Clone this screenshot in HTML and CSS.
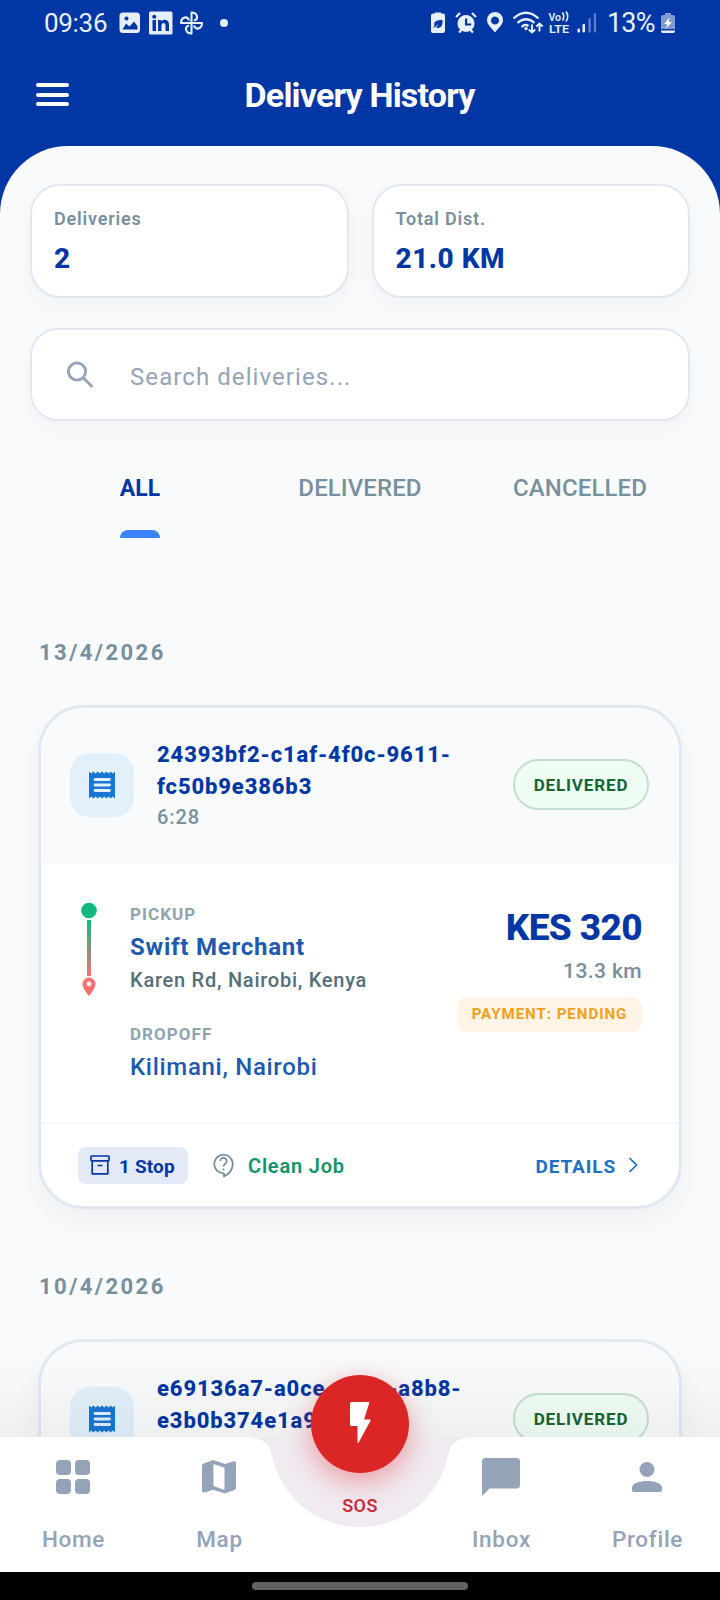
FILE: index.html
```html
<!DOCTYPE html>
<html lang="en">
<head>
<meta charset="utf-8">
<title>Delivery History</title>
<link rel="stylesheet" href="styles.css">
</head>
<body>
<div class="screen">
  <div class="status">
    <span class="clock">09:36</span>
    <svg class="status-left" width="112" height="26" viewBox="0 0 112 26" fill="#e8effc">
      <path fill-rule="evenodd" d="M4 2.500h13.500a3.500 3.500 0 0 1 3.500 3.500v13.500a3.500 3.500 0 0 1-3.500 3.500H4A3.500 3.500 0 0 1 .5 19.500V6A3.500 3.500 0 0 1 4 2.500zM3.500 19.500h15v-3.200L15 11.500l-4.500 5L7 13.500zM7.500 6.500a2 2 0 1 0 .01 0z"/>
      <path fill-rule="evenodd" d="M31.500 1.500h20.500a1.500 1.500 0 0 1 1.500 1.500v20a1.500 1.500 0 0 1-1.500 1.500H31.500A1.500 1.500 0 0 1 30 23V3a1.500 1.500 0 0 1 1.500-1.500zM33.500 10v11H37V10zM35.250 4.800a2 2 0 1 0 .01 0zM39 10v11h3.500v-5.500c0-3.200 4-3.400 4 0V21H50v-6.500c0-5.400-5.500-6-7.500-3V10z"/>
      <g fill="none" stroke="#e8effc" stroke-width="2.100" stroke-linejoin="round">
        <path d="M72.500 13V2.500c6 0 7.500 6.500 2.500 8"/>
        <path d="M72.500 13V2.500c6 0 7.500 6.500 2.500 8" transform="rotate(90 72.500 13)"/>
        <path d="M72.500 13V2.500c6 0 7.500 6.500 2.500 8" transform="rotate(180 72.500 13)"/>
        <path d="M72.500 13V2.500c6 0 7.500 6.500 2.500 8" transform="rotate(270 72.500 13)"/>
      </g>
      <circle cx="105" cy="13" r="4"/>
    </svg>
    <svg class="status-right" width="168" height="26" viewBox="0 0 168 26" fill="#e8effc">
      <path fill-rule="evenodd" d="M5 3.500V2.500h6v1h2a2 2 0 0 1 2 2V21a2 2 0 0 1-2 2H3a2 2 0 0 1-2-2V5.500a2 2 0 0 1 2-2zM3 17.500l1.500-1.500c-1.500-5 3-6 8-6 .5 6-2 9-6.500 7.500l3-4-4.500 4z"/>
      <g><path fill-rule="evenodd" d="M36 5a8.500 8.500 0 1 0 .01 0zM35 8.500h2.200v5h4v2H35z"/><path d="M26 7l4-4M42 3l4 4M29 22.500l3-3M43 22.500l-3-3" stroke="#e8effc" stroke-width="2.200"/></g>
      <path fill-rule="evenodd" d="M65 2a8 8 0 0 1 8 8c0 4.500-4 7.500-8 12.500-4-5-8-8-8-12.500a8 8 0 0 1 8-8zM65 6.500a4 4 0 1 0 .01 0z"/>
      <g fill="none" stroke="#e8effc" stroke-width="2.200"><path d="M83.500 8.500q12.500-11.500 25 0M87.500 13q8.500-7.500 17 0M91.500 17q3.500-3.500 7-1"/><path d="M102 14.500v8M98.800 19.500l3.200 3 3.200-3M109.500 21.500v-8M106.300 16.500l3.200-3 3.200 3" stroke-width="1.900"/></g>
      <circle cx="96" cy="18.500" r="1.700"/>
      <text class="volte" x="118.500" y="11" textLength="12.500" lengthAdjust="spacingAndGlyphs">Vo</text>
      <path d="M132.500 2.500q2.500 4 0 8M136 1.500q3.500 5 0 10" fill="none" stroke="#e8effc" stroke-width="1.600"/>
      <text class="volte" x="119" y="22.500" textLength="20" lengthAdjust="spacingAndGlyphs">LTE</text>
      <rect x="147.500" y="18.500" width="2.500" height="4" rx="1"/><rect x="152.500" y="14" width="2.500" height="8.500" rx="1"/>
      <rect x="158.500" y="8" width="2.300" height="14.500" rx="1" opacity=".4"/><rect x="163.800" y="3" width="2.300" height="19.500" rx="1" opacity=".4"/>
    </svg>
    <span class="percent">13%</span>
    <svg width="14" height="20" viewBox="0 0 14 20"><path d="M4 2V0h6v2h2a2 2 0 0 1 2 2v12H0V4a2 2 0 0 1 2-2z" fill="#7f9bd2"/><path d="M0 17.500h14a2 2 0 0 1-2 2.500H2a2 2 0 0 1-2-2.500z" fill="#e8effc"/><path d="M8.500 4.500L3 11h3.300L5 15.500 11 9H7.800z" fill="#fff"/></svg>
  </div>
  <header class="topbar">
    <div class="burger"><i></i><i></i><i></i></div>
    <h1 class="title">Delivery History</h1>
  </header>
  <main class="panel">
    <section class="stats">
      <div class="stat"><div class="stat-label">Deliveries</div><div class="stat-value">2</div></div>
      <div class="stat"><div class="stat-label">Total Dist.</div><div class="stat-value">21.0 KM</div></div>
    </section>
    <div class="search">
      <svg width="27" height="28" viewBox="0 0 27 28" fill="none" stroke="#94a3b8" stroke-width="2.900"><circle cx="10" cy="10.500" r="8.600"/><path d="M16.500 17l9 9"/></svg>
      <span class="placeholder">Search deliveries...</span>
    </div>
    <nav class="tabs">
      <div class="tab active"><span>ALL</span></div>
      <div class="tab"><span>DELIVERED</span></div>
      <div class="tab"><span>CANCELLED</span></div>
    </nav>
    <h2 class="date">13/4/2026</h2>
    <article class="card">
      <div class="card-head">
        <div class="tile"><svg width="26" height="28" viewBox="0 0 26 28"><path d="M0 .5l2.170 2L4.330.5l2.170 2L8.670.5l2.170 2L13 .5l2.170 2L17.330.5l2.170 2L21.670.5l2.170 2L26 .5v27l-2.170-2-2.160 2-2.170-2-2.170 2-2.160-2-2.170 2-2.170-2-2.160 2-2.170-2-2.170 2-2.160-2L0 27.500z" fill="#1976d2"/><path d="M6 8.500h14.500M6 14h14.500M6 19.500h14.500" stroke="#e1f0fb" stroke-width="2.800" stroke-linecap="round"/></svg></div>
        <div class="ident"><div class="id">24393bf2-c1af-4f0c-9611-<br>fc50b9e386b3</div><div class="time">6:28</div></div>
        <span class="badge">DELIVERED</span>
      </div>
      <div class="card-body">
        <svg class="rail" width="18" height="96" viewBox="0 0 18 96">
          <defs><linearGradient id="route" x1="0" y1="0" x2="0" y2="1"><stop offset="0" stop-color="#10b981"/><stop offset="1" stop-color="#f87171"/></linearGradient></defs>
          <circle cx="9" cy="8.500" r="7.800" fill="#10b981"/><rect x="7" y="18" width="4" height="56" fill="url(#route)"/>
          <path fill-rule="evenodd" d="M9 75.500a6.500 6.500 0 0 1 6.500 6.500c0 4.500-6.500 12-6.500 12s-6.500-7.500-6.500-12A6.500 6.500 0 0 1 9 75.500zM9 79.500a2.400 2.400 0 1 0 .01 0z" fill="#f87171"/>
        </svg>
        <div class="stops">
          <div class="kind">PICKUP</div>
          <div class="place bold">Swift Merchant</div>
          <div class="address">Karen Rd, Nairobi, Kenya</div>
          <div class="kind drop">DROPOFF</div>
          <div class="place">Kilimani, Nairobi</div>
        </div>
        <div class="fare">
          <div class="price">KES 320</div>
          <div class="distance">13.3 km</div>
          <div class="payment">PAYMENT: PENDING</div>
        </div>
      </div>
      <div class="card-foot">
        <span class="chip"><svg width="20" height="20" viewBox="0 0 20 20" fill="none" stroke="#0037a4" stroke-width="1.700" stroke-linejoin="round"><rect x="1" y="1" width="18" height="4.800" rx=".8"/><path d="M2.200 6v12.800h15.600V6M7.500 10.500h5"/></svg><span>1 Stop</span></span>
        <svg class="help" width="21" height="25" viewBox="0 0 21 25" fill="none" stroke="#78909c" stroke-width="1.800"><path d="M11 20.500v3c5-2.500 8.800-7.500 8.800-13a9.300 9.300 0 1 0-9.300 9.800z" stroke-linejoin="round"/><path d="M7.300 8a3.200 3.200 0 1 1 5.300 2.400c-1.300 1-2.100 1.400-2.100 3.200M10.500 15.500v2"/></svg>
        <span class="clean">Clean Job</span>
        <span class="details">DETAILS</span>
        <svg class="chev" width="10" height="16" viewBox="0 0 10 16" fill="none" stroke="#1e70c4" stroke-width="1.700"><path d="M1.500 1l7 7-7 7"/></svg>
      </div>
    </article>
    <h2 class="date later">10/4/2026</h2>
    <article class="card">
      <div class="card-head">
        <div class="tile"><svg width="26" height="28" viewBox="0 0 26 28"><path d="M0 .5l2.170 2L4.330.5l2.170 2L8.670.5l2.170 2L13 .5l2.170 2L17.330.5l2.170 2L21.670.5l2.170 2L26 .5v27l-2.170-2-2.160 2-2.170-2-2.170 2-2.160-2-2.170 2-2.170-2-2.160 2-2.170-2-2.170 2-2.160-2L0 27.500z" fill="#1976d2"/><path d="M6 8.500h14.500M6 14h14.500M6 19.500h14.500" stroke="#e1f0fb" stroke-width="2.800" stroke-linecap="round"/></svg></div>
        <div class="ident"><div class="id">e69136a7-a0ce-4b1c-a8b8-<br>e3b0b374e1a9</div><div class="time">&nbsp;</div></div>
        <span class="badge">DELIVERED</span>
      </div>
    </article>
  </main>

  <div class="dock">
    <div class="shade"></div>
    <svg class="dock-shape" width="720" height="135" viewBox="0 0 720 135">
      <defs><linearGradient id="well" x1="0" y1="0" x2="0" y2="1"><stop offset="0" stop-color="#efecf1"/><stop offset="1" stop-color="#f2eaf3"/></linearGradient></defs>
      <rect x="250" width="220" height="100" fill="url(#well)"/>
      <path d="M0 0H243C256 0 269 3 271.400 16A90 90 0 0 0 448.600 16C451 3 464 0 477 0H720V135H0z" fill="#fff"/>
    </svg>
    <div class="nav-items">
      <div class="nav-item home"><svg width="34" height="34" viewBox="0 0 34 34" fill="#94a3b8"><rect width="15" height="15" rx="4"/><rect x="19" width="15" height="15" rx="4"/><rect y="19" width="15" height="15" rx="4"/><rect x="19" y="19" width="15" height="15" rx="4"/></svg><span>Home</span></div>
      <div class="nav-item map"><svg width="34" height="34" viewBox="0 0 34 34" fill="#94a3b8"><path fill-rule="evenodd" d="M2 3.200L11 .2Q11.500 0 12 .2L23 4l8-2.600q3-.9 3 2v24.200q0 2-2 2.700l-9 3q-.5.2-1 0L11 29.700l-8 2.700q-3 .8-3-2V6q0-2 2-2.800zM11.500 4v22l11 4V7.800z"/></svg><span>Map</span></div>
      <div class="nav-item inbox"><svg width="38" height="38" viewBox="0 0 38 38" fill="#94a3b8"><path d="M3.500 0h31A3.500 3.500 0 0 1 38 3.500V27a3.500 3.500 0 0 1-3.500 3.500H7.500L0 38V3.500A3.500 3.500 0 0 1 3.500 0z"/></svg><span>Inbox</span></div>
      <div class="nav-item profile"><svg width="30" height="30" viewBox="0 0 30 30" fill="#94a3b8"><circle cx="15" cy="7.500" r="7.500"/><path d="M0 25.500C0 21.500 7 19 15 19s15 2.500 15 6.500V28a2 2 0 0 1-2 2H2a2 2 0 0 1-2-2z"/></svg><span>Profile</span></div>
    </div>
    <div class="fab"><svg width="21" height="41" viewBox="0 0 21 41" fill="#fff"><path d="M1.500 0h17q1 0 .7 1L14 17.500h5.800q1.400 0 .7 1.300L8.800 40.300Q7.500 42 7.500 40V24H1.500Q0 24 0 22.500v-21Q0 0 1.500 0z"/></svg></div>
    <span class="sos">SOS</span>
    <div class="gesture"><i></i></div>
  </div>
</div>
</body>
</html>
```
FILE: styles.css
```css
* { box-sizing: border-box; }
body { margin: 0; font-family: Roboto, "Liberation Sans", sans-serif; background: #0037a4; }
.screen { position: relative; width: 720px; height: 1600px; overflow: hidden; display: flex; flex-direction: column; }
svg { display: block; flex: none; }

.status { height: 46px; flex: none; display: flex; align-items: center; color: #e8effc; padding: 0 44px; }
.clock, .percent { font-size: 26px; line-height: 30px; letter-spacing: -0.3px; font-weight: 400; }
.clock { width: 75px; }
.status-right { margin-left: 199px; }
.volte { font-size: 11px; font-weight: 600; }
.percent { margin-left: 9px; width: 54px; letter-spacing: -0.8px; font-size: 27px; }

.topbar { height: 100px; flex: none; display: flex; align-items: center; padding: 0 36px 3px; }
.burger { display: flex; flex-direction: column; gap: 5.500px; width: 33px; }
.burger i { height: 4px; border-radius: 2px; background: #fff; }
.title { flex: 1; margin: 1px 34px 0 0; text-align: center; color: #fff; font-size: 34px; line-height: 40px; font-weight: 700; letter-spacing: -0.8px; }

.panel { flex: 1; min-height: 0; background: #f8fafc; border-radius: 68px 68px 0 0; padding: 38px 30px 0; }
.stats { display: flex; gap: 23px; }
.stat { flex: 1; height: 114px; padding: 21px 22px; background: #fff; border: 2px solid #e2e8f0; border-radius: 30px; box-shadow: 0 8px 22px rgba(0,0,0,.035); }
.stat-label { font-size: 18px; line-height: 24px; font-weight: 600; letter-spacing: .8px; color: #78909c; }
.stat-value { margin-top: 11px; font-size: 28px; line-height: 34px; font-weight: 800; color: #0037a4; letter-spacing: .5px; }
.search { margin-top: 30px; height: 93px; display: flex; align-items: center; padding: 0 35px; background: #fff; border: 2px solid #e2e8f0; border-radius: 28px; box-shadow: 0 8px 22px rgba(0,0,0,.035); }
.placeholder { margin: 5px 0 0 36px; font-size: 24px; line-height: 30px; letter-spacing: 1.08px; color: #94a3b8; }

.tabs { margin-top: 52px; display: grid; grid-template-columns: repeat(3, 1fr); height: 65px; }
.tab { display: flex; justify-content: center; font-size: 24px; line-height: 30px; font-weight: 500; letter-spacing: .1px; color: #78909c; }
.tab.active { color: #0037a4; font-weight: 700; font-size: 23px; letter-spacing: 0; line-height: 31px; }
.tab.active span { display: flex; flex-direction: column; justify-content: space-between; }
.tab.active span::after { content: ""; height: 8px; border-radius: 8px 8px 0 0; background: #3b82f6; }

.date { margin: 102px 0 39px 9px; font-size: 22px; line-height: 26px; font-weight: 700; letter-spacing: 2.450px; color: #78909c; }
.date.later { margin-top: 65px; }
.card { margin: 0 8px; border: 3px solid #e2e8f0; border-radius: 46px; background: #fff; overflow: hidden; box-shadow: 0 12px 30px rgba(0,0,0,.045); }
.card-head { height: 154px; display: flex; align-items: center; padding: 0 30px 0 29px; background: #f8fafc; }
.tile { flex: none; width: 64px; height: 64px; border-radius: 20px; background: #e1f0fb; display: grid; place-items: center; }
.ident { flex: 1; margin-left: 23px; white-space: nowrap; }
.id { padding-top: 1px; font-size: 22px; line-height: 32px; font-weight: 800; letter-spacing: .88px; color: #0037a4; }
.time { margin-top: -1px; font-size: 20px; line-height: 30px; font-weight: 500; letter-spacing: .9px; color: #78909c; }
.badge { flex: none; width: 136px; height: 51px; margin-bottom: 2px; border: 2px solid #c5dfcf; border-radius: 26px; background: #f0fdf4; color: #166534; display: grid; place-items: center; font-size: 17px; font-weight: 700; letter-spacing: .85px; padding-top: 1px; }

.card-body { height: 260px; border-top: 1px solid #f1f5f9; display: flex; align-items: flex-start; padding: 39px 37px 0 39px; }
.stops { flex: 1; margin: 2px 0 0 32px; }
.kind { font-size: 17px; line-height: 20px; font-weight: 700; letter-spacing: 1.050px; color: #90a4ae; }
.drop { margin-top: 30px; }
.place { margin-top: 7px; font-size: 24px; line-height: 32px; font-weight: 500; letter-spacing: .7px; color: #1e5ab0; }
.bold { font-weight: 700; letter-spacing: .75px; }
.address { margin-top: 3px; font-size: 20px; line-height: 28px; letter-spacing: .75px; font-weight: 500; color: #546e7a; }
.fare { display: flex; flex-direction: column; align-items: flex-end; margin-top: 4px; }
.price { font-size: 37px; line-height: 44px; font-weight: 800; letter-spacing: -0.6px; color: #0037a4; }
.distance { margin-top: 7px; font-size: 21px; line-height: 28px; font-weight: 500; letter-spacing: .4px; color: #78909c; }
.payment { margin-top: 12px; width: 185px; height: 35px; border-radius: 10px; background: #fff4e5; color: #f0a020; display: grid; place-items: center; font-size: 15px; font-weight: 700; letter-spacing: 1px; padding-bottom: 1px; }

.card-foot { height: 84px; border-top: 2px solid #f5f7fa; display: flex; align-items: center; padding: 0 41px 0 37px; }
.chip { width: 110px; height: 37px; border-radius: 8px; background: #e3e9f6; display: flex; align-items: center; padding: 0 12px; gap: 9px; color: #0037a4; font-size: 19px; font-weight: 700; letter-spacing: .15px; white-space: nowrap; }
.chip svg { margin-bottom: 1px; }
.chip span { margin-top: 3px; }
.help { margin-left: 25px; }
.clean { margin: 2px 0 0 14px; font-size: 20px; font-weight: 600; letter-spacing: .8px; color: #0f9468; }
.details { margin: 2px 0 0 auto; font-size: 19px; font-weight: 700; letter-spacing: .9px; color: #1e70c4; }
.chev { margin-left: 12px; }

/* Bottom navigation floats above the scrolling list */
.dock { position: absolute; left: 0; right: 0; bottom: 0; height: 163px; }
.shade { position: absolute; left: 0; right: 0; top: -80px; height: 80px; background: linear-gradient(rgba(0,0,0,0), rgba(0,0,0,.045)); }
.dock-shape { position: absolute; left: 0; top: 0; }
.nav-items { position: absolute; left: 0; top: 0; width: 720px; height: 135px; display: grid; grid-template-columns: 147px 145px 136px 147px 145px; }
.nav-item { display: grid; grid-template-rows: 81px 43px; justify-items: center; align-items: center; font-size: 22.500px; font-weight: 500; letter-spacing: .7px; color: #94a3b8; line-height: 43px; }
.nav-item svg { margin: 0 1px 1px 0; }
.nav-item.inbox { grid-column: 4; }
.fab { position: absolute; left: 311px; top: -62px; width: 98px; height: 98px; border-radius: 50%; background: #dc2626; display: grid; place-items: center; padding-bottom: 3px; box-shadow: 0 8px 28px rgba(230,50,60,.45); }
.sos { position: absolute; left: 320px; width: 80px; top: 57px; text-align: center; font-size: 18px; line-height: 24px; font-weight: 600; letter-spacing: .4px; color: #c9303a; }
.gesture { position: absolute; left: 0; right: 0; bottom: 0; height: 28px; background: #000; display: flex; justify-content: center; align-items: center; }
.gesture i { width: 216px; height: 8px; border-radius: 4px; background: #626262; }
```
